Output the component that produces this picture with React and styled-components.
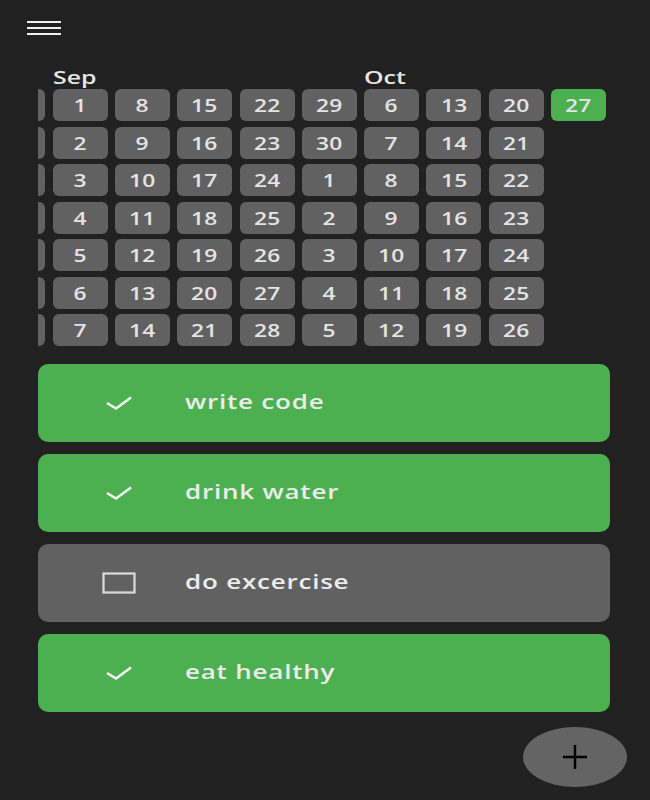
import React from "react";
import styled, { createGlobalStyle } from "styled-components";

const Global = createGlobalStyle`
  html, body { margin: 0; padding: 0; background: #212121; }
  body { font-family: "Open Sans", "Noto Sans", sans-serif; color: #e8e8e8; }
`;

const Page = styled.div`
  position: relative;
  width: 650px;
  height: 800px;
  box-sizing: border-box;
  padding: 0 40px 0 38px;
  overflow: hidden;
`;

const Header = styled.div`
  height: 67px;
  display: flex;
  align-items: flex-start;
  padding-top: 21px;
  margin-left: -11px;
  box-sizing: border-box;
`;

const MenuButton = styled.div`
  width: 34px;
  display: flex;
  flex-direction: column;
  gap: 4px;
  & > span {
    display: block;
    height: 2px;
    background: #f0f0f0;
  }
`;

const Calendar = styled.div`
  display: flex;
  justify-content: flex-end;
  gap: 7.3px;
  overflow: hidden;
  padding-right: 4px;
`;

const Week = styled.div`
  flex: 0 0 55px;
  display: flex;
  flex-direction: column;
  gap: 5.5px;
`;

const MonthLabel = styled.div`
  height: 16.5px;
  font-size: 18px;
  font-weight: 600;
  line-height: 20px;
  color: #e6e6e6;
  white-space: nowrap;
  transform: scaleX(1.38);
  transform-origin: left center;
`;

const Day = styled.div`
  height: 32px;
  border-radius: 6px;
  background: ${(p) => (p.$active ? "#4caf50" : "#616161")};
  color: #e4e4e4;
  display: flex;
  align-items: center;
  justify-content: center;
`;

const DayNum = styled.span`
  font-size: 17.5px;
  font-weight: 600;
  letter-spacing: 0.3px;
  transform: scaleX(1.3);
`;

const Tasks = styled.div`
  margin-top: 18px;
  display: flex;
  flex-direction: column;
  gap: 12px;
`;

const Task = styled.div`
  height: 78px;
  border-radius: 10px;
  background: ${(p) => (p.$done ? "#4caf50" : "#616161")};
  display: grid;
  grid-template-columns: 132px 1fr;
  align-items: center;
  padding-left: 15px;
`;

const IconBox = styled.div`
  display: flex;
  justify-content: center;
  align-items: center;
`;

const Label = styled.div`
  font-size: 20px;
  font-weight: 600;
  color: #ececec;
  letter-spacing: 0.6px;
  margin-top: -3px;
  transform: scaleX(1.3);
  transform-origin: left center;
`;

const Fab = styled.div`
  position: absolute;
  left: 523px;
  top: 727px;
  width: 104px;
  height: 60px;
  border-radius: 50%;
  background: #646464;
  display: flex;
  align-items: center;
  justify-content: center;
`;

const Check = () => (
  <svg width="28" height="16" viewBox="0 0 28 16">
    <polyline points="2,8 11,13.5 26,2.5" fill="none" stroke="#f4f4f4" strokeWidth="2.6" strokeLinejoin="miter" />
  </svg>
);

const Box = () => (
  <svg width="34" height="22" viewBox="0 0 34 22">
    <rect x="1.5" y="1.5" width="31" height="19" fill="none" stroke="#dcdcdc" strokeWidth="2.2" />
  </svg>
);

const Plus = () => (
  <svg width="28" height="28" viewBox="0 0 28 28">
    <path d="M14 2 V26 M2 14 H26" stroke="#000" strokeWidth="2.4" />
  </svg>
);

const weeks = [
  { label: "", days: [25, 26, 27, 28, 29, 30, 31] },
  { label: "Sep", days: [1, 2, 3, 4, 5, 6, 7] },
  { label: "", days: [8, 9, 10, 11, 12, 13, 14] },
  { label: "", days: [15, 16, 17, 18, 19, 20, 21] },
  { label: "", days: [22, 23, 24, 25, 26, 27, 28] },
  { label: "", days: [29, 30, 1, 2, 3, 4, 5] },
  { label: "Oct", days: [6, 7, 8, 9, 10, 11, 12] },
  { label: "", days: [13, 14, 15, 16, 17, 18, 19] },
  { label: "", days: [20, 21, 22, 23, 24, 25, 26] },
  { label: "", days: [27], today: true },
];

const tasks = [
  { name: "write code", done: true },
  { name: "drink water", done: true },
  { name: "do excercise", done: false },
  { name: "eat healthy", done: true },
];

export default function App() {
  return (
    <Page>
      <Global />
      <Header>
        <MenuButton>
          <span />
          <span />
          <span />
        </MenuButton>
      </Header>
      <Calendar>
        {weeks.map((w, i) => (
          <Week key={i}>
            <MonthLabel>{w.label}</MonthLabel>
            {w.days.map((d, j) => (
              <Day key={j} $active={w.today}>
                <DayNum>{d}</DayNum>
              </Day>
            ))}
          </Week>
        ))}
      </Calendar>
      <Tasks>
        {tasks.map((t) => (
          <Task key={t.name} $done={t.done}>
            <IconBox>{t.done ? <Check /> : <Box />}</IconBox>
            <Label>{t.name}</Label>
          </Task>
        ))}
      </Tasks>
      <Fab>
        <Plus />
      </Fab>
    </Page>
  );
}
